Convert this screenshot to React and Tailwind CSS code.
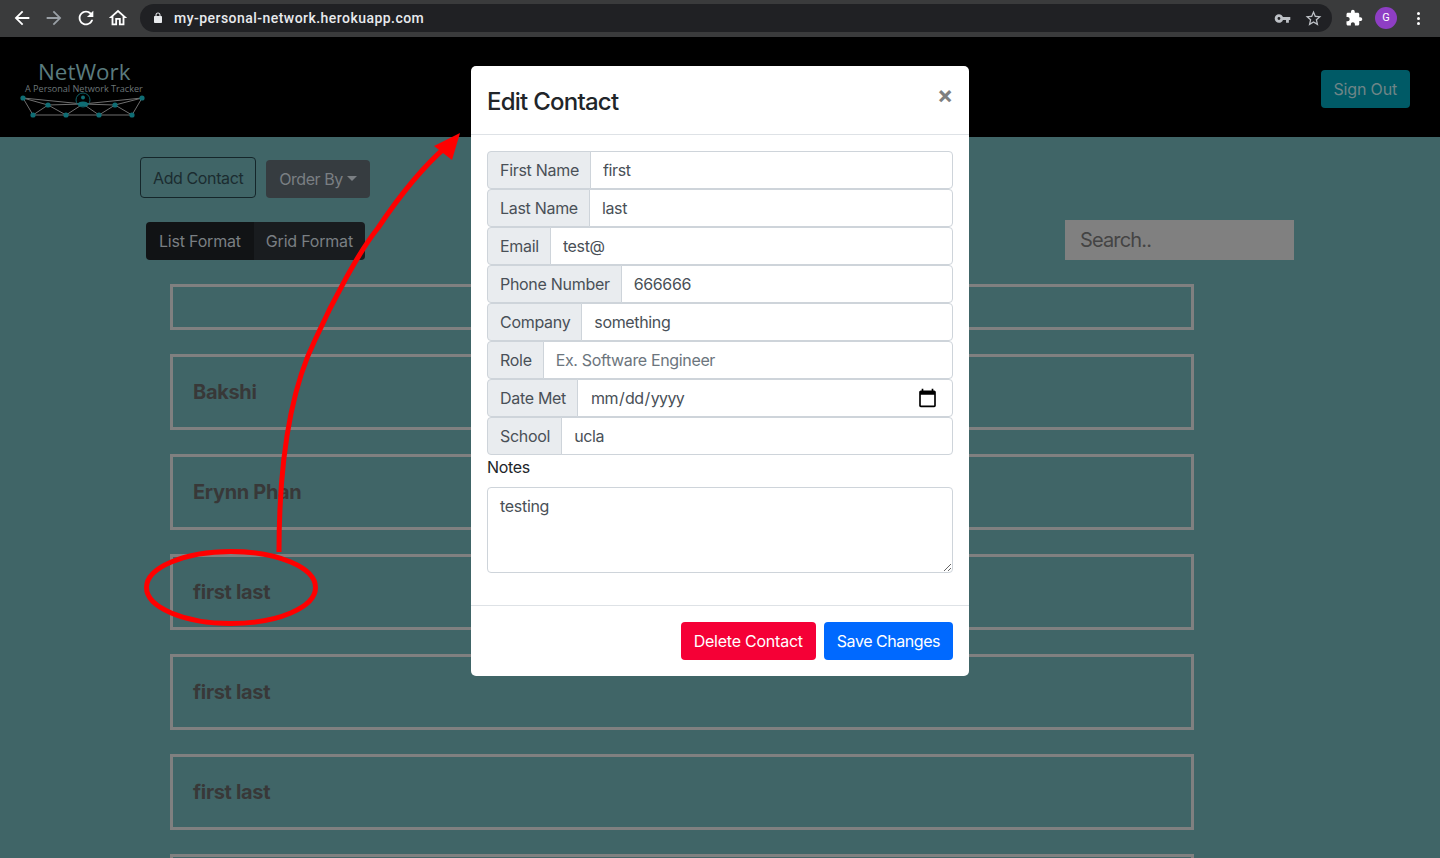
const FONT = { fontFamily: 'Inter, "Noto Sans", sans-serif' };

function MaterialIcon({ d, className = 'h-6 w-6' }) {
  return (
    <svg className={className} viewBox="0 0 24 24" fill="currentColor" aria-hidden>
      <path d={d} />
    </svg>
  );
}

const ICONS = {
  back: 'M20 11H7.83l5.59-5.59L12 4l-8 8 8 8 1.41-1.41L7.83 13H20v-2z',
  forward: 'M12 4l-1.41 1.41L16.17 11H4v2h12.17l-5.58 5.59L12 20l8-8z',
  reload:
    'M17.65 6.35C16.2 4.9 14.21 4 12 4c-4.42 0-7.99 3.58-7.99 8s3.57 8 7.99 8c3.73 0 6.84-2.55 7.73-6h-2.08c-.82 2.33-3.04 4-5.65 4-3.31 0-6-2.69-6-6s2.69-6 6-6c1.66 0 3.14.69 4.22 1.78L13 11h7V4l-2.35 2.35z',
  home: 'M12 5.69l5 4.5V18h-2v-6H9v6H7v-7.81l5-4.5M12 3L2 12h3v8h6v-6h2v6h6v-8h3L12 3z',
  lock: 'M18 8h-1V6c0-2.76-2.24-5-5-5S7 3.24 7 6v2H6c-1.1 0-2 .9-2 2v10c0 1.1.9 2 2 2h12c1.1 0 2-.9 2-2V10c0-1.1-.9-2-2-2zM9 6c0-1.66 1.34-3 3-3s3 1.34 3 3v2H9V6z',
  key: 'M12.65 10C11.83 7.67 9.61 6 7 6c-3.31 0-6 2.69-6 6s2.69 6 6 6c2.61 0 4.83-1.67 5.65-4H17v4h4v-4h2v-4H12.65zM7 14c-1.1 0-2-.9-2-2s.9-2 2-2 2 .9 2 2-.9 2-2 2z',
  star: 'M22 9.24l-7.19-.62L12 2 9.19 8.63 2 9.24l5.46 4.73L5.82 21 12 17.27 18.18 21l-1.63-7.03L22 9.24zM12 15.4l-3.76 2.27 1-4.28-3.32-2.88 4.38-.38L12 6.1l1.71 4.04 4.38.38-3.32 2.88 1 4.28L12 15.4z',
  puzzle:
    'M20.5 11H19V7c0-1.1-.9-2-2-2h-4V3.5C13 2.12 11.88 1 10.5 1S8 2.12 8 3.5V5H4c-1.1 0-1.99.9-1.99 2v3.8H3.5c1.49 0 2.7 1.21 2.7 2.7s-1.21 2.7-2.7 2.7H2V20c0 1.1.9 2 2 2h3.8v-1.5c0-1.49 1.21-2.7 2.7-2.7 1.49 0 2.7 1.21 2.7 2.7V22H17c1.1 0 2-.9 2-2v-4h1.5c1.38 0 2.5-1.12 2.5-2.5S21.88 11 20.5 11z',
};

function BrowserBar() {
  return (
    <div className="flex h-[37px] items-center bg-[#3a3b3c] pb-px tracking-normal text-white">
      <div className="flex w-[140px] shrink-0 items-center pl-[6px]">
        <div className="flex w-[32px] justify-center"><MaterialIcon d={ICONS.back} className="h-[22px] w-[22px]" /></div>
        <div className="flex w-[32px] justify-center text-[#9aa0a6]"><MaterialIcon d={ICONS.forward} className="h-[22px] w-[22px]" /></div>
        <div className="flex w-[32px] justify-center"><MaterialIcon d={ICONS.reload} className="h-[22px] w-[22px]" /></div>
        <div className="flex w-[32px] justify-center"><MaterialIcon d={ICONS.home} className="h-[22px] w-[22px]" /></div>
      </div>
      <div className="flex h-[28px] flex-1 items-center rounded-full bg-[#202124] pl-[12px] pr-[9px]">
        <MaterialIcon d={ICONS.lock} className="h-[12px] w-[12px] text-[#e8eaed]" />
        <span
          className="ml-[10px] flex-1 text-[14px] font-medium tracking-[0.46px] text-[#e8eaed]"
          style={{ fontFamily: 'Roboto, sans-serif' }}
        >
          my-personal-network.herokuapp.com
        </span>
        <MaterialIcon d={ICONS.key} className="mr-[13px] h-[17px] w-[17px] text-[#bdc1c6]" />
        <MaterialIcon d={ICONS.star} className="h-[19px] w-[19px] text-[#bdc1c6]" />
      </div>
      <div className="flex w-[108px] shrink-0 items-center pl-[13px]">
        <MaterialIcon d={ICONS.puzzle} className="h-[18px] w-[18px]" />
        <div
          className="ml-[12px] flex h-[22px] w-[22px] items-center justify-center rounded-full bg-[#8e3ec4] text-[11px]"
          style={{ fontFamily: 'Roboto, sans-serif' }}
        >
          G
        </div>
        <div className="ml-[20px] flex flex-col gap-[2px]">
          <span className="h-[3px] w-[3px] rounded-full bg-white" />
          <span className="h-[3px] w-[3px] rounded-full bg-white" />
          <span className="h-[3px] w-[3px] rounded-full bg-white" />
        </div>
      </div>
    </div>
  );
}

function Logo() {
  const bottom = [[33, 115], [66, 115], [99, 115], [132, 115]];
  const mid = [[48, 105], [115, 105]];
  return (
    <svg width="130" height="70" viewBox="18 52 130 70" className="tracking-normal" aria-hidden>
      <text x="38" y="80" fill="#5a7b7e" fontSize="22.4" style={{ fontFamily: '"Open Sans", sans-serif' }}>
        NetWork
      </text>
      <text x="25" y="91.5" fill="#6d7678" fontSize="9.1" style={{ fontFamily: '"Open Sans", sans-serif' }}>
        A Personal Network Tracker
      </text>
      <g stroke="#6f6f6f" strokeWidth="1" fill="none">
        <path d="M23 98L83 104L142 98L132 115H33L23 98" />
        <path d="M23 98L48 105L33 115M48 105L66 115L83 104L99 115L115 105L132 115M115 105L142 98M48 105L83 104L115 105" />
      </g>
      <circle cx="83" cy="100" r="7" fill="none" stroke="#0f5f66" strokeWidth="1" />
      <circle cx="83" cy="97.5" r="2" fill="#0f6d74" />
      <ellipse cx="83" cy="104" rx="5" ry="2.6" fill="#0f6d74" />
      {[[23, 98], [142, 98], ...mid, ...bottom].map(([cx, cy]) => (
        <circle key={`${cx}-${cy}`} cx={cx} cy={cy} r="2.6" fill="#0f6d74" />
      ))}
    </svg>
  );
}

function ContactCard({ name, tall = true }) {
  return (
    <div
      className={`flex shrink-0 items-center border-[3px] border-[#808080] px-5 text-[20px] font-bold tracking-[-0.33px] text-[#383838] ${
        tall ? 'h-[76px]' : 'h-[46px]'
      }`}
    >
      {name}
    </div>
  );
}

function Field({ label, value, placeholder, type = 'text' }) {
  return (
    <div className="flex h-[38px] w-full">
      <span className="flex shrink-0 items-center rounded-l border border-[#ced4da] bg-[#e9ecef] px-3 tracking-[-0.3px] text-[#495057]">
        {label}
      </span>
      <input
        type={type}
        defaultValue={value}
        placeholder={placeholder}
        className={`-ml-[2px] min-w-0 flex-1 rounded-r border border-[#ced4da] bg-white px-3 text-[#495057] outline-none placeholder:text-[#6c757d] [&::-webkit-calendar-picker-indicator]:m-0 [&::-webkit-calendar-picker-indicator]:mr-[2px] [&::-webkit-calendar-picker-indicator]:h-[21px] [&::-webkit-calendar-picker-indicator]:w-[21px] [&::-webkit-calendar-picker-indicator]:p-0 ${
          type === 'date' ? 'tracking-[-0.6px]' : 'tracking-[-0.35px]'
        }`}
      />
    </div>
  );
}

function EditContactModal() {
  return (
    <div className="absolute left-[471px] top-[66px] flex h-[610px] w-[498px] flex-col rounded-[5px] bg-white text-[#212529]">
      <div className="flex h-[69px] shrink-0 items-start justify-between border-b border-[#dee2e6] px-4 pt-[20px]">
        <h2 className="mt-px text-[24px] font-medium leading-[30px] tracking-[-0.75px]">Edit Contact</h2>
        <span className="-mt-[2px] text-[24px] font-bold leading-[22px] text-[#7f7f7f]">×</span>
      </div>
      <div className="flex flex-1 flex-col px-4 pt-4">
        <Field label="First Name" value="first" />
        <Field label="Last Name" value="last" />
        <Field label="Email" value="test@" />
        <Field label="Phone Number" value="666666" />
        <Field label="Company" value="something" />
        <Field label="Role" placeholder="Ex. Software Engineer" />
        <Field label="Date Met" type="date" />
        <Field label="School" value="ucla" />
        <label className="h-[32px] leading-[24px]">Notes</label>
        <textarea
          defaultValue="testing"
          className="h-[86px] w-full rounded border border-[#ced4da] px-3 py-[6px] text-[#495057] outline-none"
        />
      </div>
      <div className="flex h-[71px] shrink-0 items-center justify-end gap-2 border-t border-[#dee2e6] px-4">
        <button type="button" className="h-[38px] rounded bg-[#f50036] px-[13px] tracking-[-0.23px] text-white">
          Delete Contact
        </button>
        <button type="button" className="h-[38px] rounded bg-[#0069ff] px-[13px] tracking-[-0.46px] text-white">
          Save Changes
        </button>
      </div>
    </div>
  );
}

function Annotation() {
  return (
    <svg className="pointer-events-none absolute left-0 top-0" width="1440" height="858" aria-hidden>
      <ellipse cx="231" cy="587.5" rx="84.5" ry="36" fill="none" stroke="#ff0000" strokeWidth="5" />
      <path
        d="M279 552C279 470 288 395 315 340C333 300 360 250 378 228C400 195 425 165 447 146"
        fill="none"
        stroke="#ff0000"
        strokeWidth="5"
      />
      <path d="M460 133L434 146L452 160Z" fill="#ff0000" />
    </svg>
  );
}

export default function App() {
  return (
    <div className="relative h-[858px] w-[1440px] overflow-hidden bg-[#406567] text-[16px] tracking-[-0.3px]" style={FONT}>
      <BrowserBar />
      <nav className="flex h-[100px] items-center justify-between bg-black pl-[18px] pr-[30px]">
        <Logo />
        <button type="button" className="mt-1 h-[38px] rounded bg-[#005a66] px-[13px] tracking-[-0.17px] text-[#6f8587]">
          Sign Out
        </button>
      </nav>
      <main>
        <div className="flex items-end gap-[10px] pl-[140px] pt-[20px]">
          <button type="button" className="h-[41px] rounded border border-[#15262a] px-3 tracking-[-0.39px] text-[#1b2c30]">
            Add Contact
          </button>
          <button type="button" className="flex h-[38px] items-center rounded bg-[#363c40] px-[13px] tracking-[-0.45px] text-[#7a7f83]">
            Order By
            <span className="ml-[4px] mt-[-2px] border-x-[5px] border-t-[5px] border-x-transparent border-t-[#7a7f83]" />
          </button>
        </div>
        <div className="mt-[22px] flex h-[40px] items-end justify-between pl-[146px] pr-[146px]">
          <div className="flex h-[38px] overflow-hidden rounded tracking-[-0.2px]">
            <span className="flex items-center bg-[#111315] px-[13px] text-[#7a7f83]">List Format</span>
            <span className="flex items-center bg-[#191c1f] px-3 text-[#7a7f83]">Grid Format</span>
          </div>
          <input
            placeholder="Search.."
            className="h-[40px] w-[229px] bg-[#808080] px-[15px] text-[20px] tracking-[-0.85px] text-[#444444] outline-none placeholder:text-[#444444]"
          />
        </div>
        <div className="ml-[170px] mt-[24px] flex w-[1024px] flex-col gap-6">
          <ContactCard tall={false} />
          <ContactCard name="Bakshi" />
          <ContactCard name="Erynn Phan" />
          <ContactCard name="first last" />
          <ContactCard name="first last" />
          <ContactCard name="first last" />
          <ContactCard name="first last" />
        </div>
      </main>
      <EditContactModal />
      <Annotation />
    </div>
  );
}
